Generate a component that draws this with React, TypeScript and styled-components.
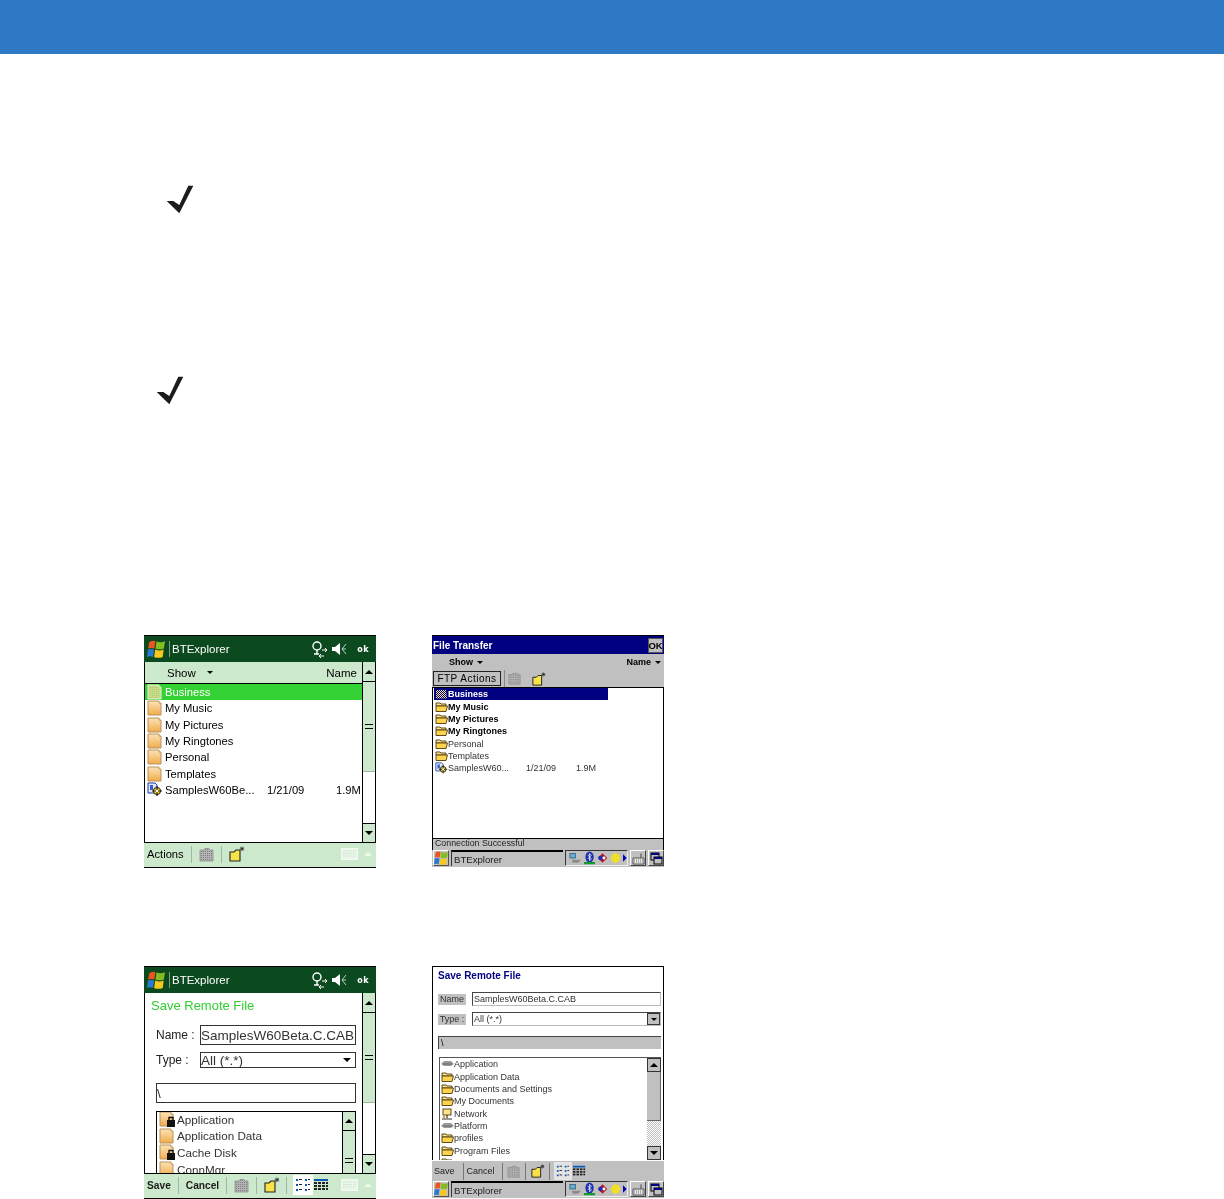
import React from "react";
import styled, { createGlobalStyle } from "styled-components";

const GlobalStyle = createGlobalStyle`
  html, body {
    margin: 0;
    padding: 0;
    background: #fff;
  }
`;

const UI_FONT = `"Liberation Sans", Arial, sans-serif`;
const OK_FONT = `"DejaVu Sans", Verdana, sans-serif`;

const Page = styled.div`
  width: 1224px;
  height: 1199px;
  overflow: hidden;
  background: #fff;
`;

const TopBand = styled.div`
  height: 54px;
  background: #2e7ac6;
`;

const NoteIcon = styled.svg<{ $left: number; $top: number }>`
  display: block;
  width: 29px;
  height: 29px;
  margin-left: ${(p) => p.$left}px;
  margin-top: ${(p) => p.$top}px;
`;

const ScreenGrid = styled.div`
  display: grid;
  grid-template-columns: 232px 232px;
  column-gap: 56px;
  row-gap: 98px;
  margin: 230px 0 0 144px;
`;

const Screen = styled.div<{ $ce?: boolean }>`
  width: 232px;
  height: ${(p) => (p.$ce ? 232 : 233)}px;
  box-sizing: border-box;
  display: flex;
  flex-direction: column;
  overflow: hidden;
  background: #fff;
  filter: blur(0.35px);
  font-family: ${UI_FONT};
  color: #000;
  border: 0 solid #000;
  border-width: ${(p) => (p.$ce ? "1px 0 0 0" : "1px 0")};
`;

/* Windows Mobile parts */

const WmTitle = styled.div`
  flex: none;
  height: 26px;
  box-sizing: content-box;
  display: flex;
  align-items: center;
  background: #0b4a1e;
  color: #fff;
  font-size: 11.5px;
  padding-left: 3px;
`;

const TitleSep = styled.span`
  width: 1px;
  height: 16px;
  margin: 0 2px 0 4px;
  background: #7d9e85;
`;

const OkLabel = styled.span`
  margin: 0 7px 0 10px;
  font-family: ${OK_FONT};
  font-size: 8px;
  font-weight: 700;
  letter-spacing: 0.5px;
`;

const IconGap = styled.span<{ $w: number }>`
  flex: none;
  width: ${(p) => p.$w}px;
`;

const Spacer = styled.span`
  flex: 1;
`;

const WmBody = styled.div`
  flex: 1;
  min-height: 0;
  display: flex;
  border: 0 solid #000;
  border-width: 0 1px;
`;

const WmPane = styled.div`
  flex: 1;
  min-width: 0;
  display: flex;
  flex-direction: column;
`;

const WmColumns = styled.div`
  flex: none;
  height: 21px;
  display: flex;
  align-items: center;
  padding: 0 5px 0 22px;
  background: #cde9cd;
  border-bottom: 1px solid #000;
  font-size: 11.5px;
`;

const WmRow = styled.div<{ $selected?: boolean }>`
  height: 16.33px;
  display: flex;
  align-items: center;
  padding-left: 2px;
  font-size: 11.2px;
  white-space: nowrap;
  background: ${(p) => (p.$selected ? "#33d133" : "transparent")};
  color: ${(p) => (p.$selected ? "#fff" : "#000")};
`;

const RowLabel = styled.span<{ $width?: number; $left?: number }>`
  display: inline-block;
  margin-left: ${(p) => p.$left ?? 2}px;
  ${(p) => (p.$width ? `width: ${p.$width}px;` : "")}
`;

const Scroll = styled.div`
  flex: none;
  width: 12px;
  display: flex;
  flex-direction: column;
  border-left: 1px solid #000;
  background: #fff;
`;

const ScrollBtn = styled.div<{ $h: number; $down?: boolean }>`
  flex: none;
  height: ${(p) => p.$h}px;
  box-sizing: border-box;
  display: flex;
  align-items: center;
  justify-content: center;
  background: #cde9cd;
  border: 0 solid #000;
  border-width: ${(p) => (p.$down ? "1px 0 0 0" : "0 0 1px 0")};
  &::after {
    content: "";
    border-left: 4px solid transparent;
    border-right: 4px solid transparent;
    ${(p) => (p.$down ? "border-top: 4px solid #000;" : "border-bottom: 4px solid #000;")}
  }
`;

const ScrollThumb = styled.div<{ $h: number }>`
  flex: none;
  height: ${(p) => p.$h}px;
  display: flex;
  align-items: center;
  justify-content: center;
  background: #cde9cd;
  border-bottom: 1px solid #9db89d;
  box-sizing: border-box;
  &::after {
    content: "";
    width: 8px;
    height: 3px;
    border-top: 1px solid #000;
    border-bottom: 1px solid #000;
  }
`;

const ScrollTrack = styled.div`
  flex: 1;
  min-height: 0;
`;

const WmToolbar = styled.div`
  flex: none;
  height: 25px;
  box-sizing: border-box;
  display: flex;
  align-items: center;
  padding: 0 0 2px 3px;
  background: #cde9cd;
  border-top: 1px solid #000;
  font-size: 11.2px;
`;

const ToolText = styled.span`
  font-size: 10.2px;
  font-weight: 700;
  color: #1c1c1c;
`;

const ToolSep = styled.span<{ $left?: number; $right?: number; $color?: string }>`
  flex: none;
  width: 1px;
  height: 17px;
  margin-left: ${(p) => p.$left ?? 7}px;
  margin-right: ${(p) => p.$right ?? 7}px;
  background: ${(p) => p.$color ?? "#9fb89f"};
`;

const ActiveTool = styled.span<{ $ce?: boolean }>`
  display: flex;
  padding: 2px;
  background: ${(p) => (p.$ce ? "#e4e4e4" : "#fff")};
`;

const FormHeading = styled.div`
  margin: 5px 0 11px 6px;
  color: #33cc33;
  font-size: 13px;
  line-height: 16px;
`;

const FormRow = styled.div<{ $mb: number }>`
  display: flex;
  align-items: center;
  margin: 0 6px 0 11px;
  margin-bottom: ${(p) => p.$mb}px;
  font-size: 12px;
  color: #222;
`;

const FormLabel = styled.span`
  width: 44px;
  flex: none;
`;

const WmField = styled.div<{ $h: number }>`
  flex: 1;
  min-width: 0;
  height: ${(p) => p.$h}px;
  box-sizing: border-box;
  display: flex;
  align-items: center;
  justify-content: space-between;
  padding: 0 4px 0 0;
  border: 1px solid #333;
  font-size: 13.5px;
  color: #333;
  white-space: nowrap;
`;

const SelectArrow = styled.span<{ $w?: number }>`
  border-left: ${(p) => p.$w ?? 5}px solid transparent;
  border-right: ${(p) => p.$w ?? 5}px solid transparent;
  border-top: ${(p) => p.$w ?? 5}px solid #000;
`;

const NestedList = styled.div`
  flex: 1;
  min-height: 0;
  margin: 0 6px 0 11px;
  display: flex;
  border: 1px solid #000;
  border-bottom: 0;
  overflow: hidden;
`;

const NestedRows = styled.div`
  flex: 1;
  min-width: 0;
  margin-top: -1px;
`;

const NestedRow = styled.div`
  height: 16.6px;
  display: flex;
  align-items: center;
  padding-left: 2px;
  gap: 2px;
  font-size: 11.7px;
  color: #333;
  white-space: nowrap;
`;

/* Windows CE parts */

const CeTitle = styled.div`
  flex: none;
  height: 18px;
  display: flex;
  align-items: center;
  justify-content: space-between;
  padding: 0 1px;
  background: #000080;
  color: #fff;
  font-size: 10px;
  font-weight: 700;
`;

const OkButton = styled.span`
  width: 15px;
  height: 15px;
  box-sizing: border-box;
  display: flex;
  align-items: center;
  justify-content: center;
  background: #c0c0c0;
  color: #000;
  border: 1px solid #555;
  font-size: 9.5px;
  font-weight: 700;
`;

const CeHeader = styled.div`
  flex: none;
  background: #c0c0c0;
  border-bottom: 1px solid #000;
  height: 33px;
  display: flex;
  flex-direction: column;
  font-size: 9px;
  font-weight: 700;
`;

const CeColumns = styled.div`
  height: 16px;
  display: flex;
  align-items: center;
  gap: 4px;
  padding: 0 3px 0 17px;
`;

const CeTools = styled.div`
  display: flex;
  align-items: center;
`;

const FtpButton = styled.span`
  margin-left: 1px;
  width: 68px;
  height: 15px;
  box-sizing: border-box;
  display: flex;
  align-items: center;
  justify-content: center;
  border: 1px solid #222;
  font-size: 10px;
  font-weight: 400;
  letter-spacing: 0.5px;
`;

const CeList = styled.div`
  flex: 1;
  min-height: 0;
  padding-left: 1px;
  overflow: hidden;
  border: 0 solid #000;
  border-width: 0 1px;
`;

const CeRow = styled.div<{ $selected?: boolean; $thin?: boolean; $w?: number }>`
  height: 12.35px;
  width: ${(p) => p.$w ?? 174}px;
  display: flex;
  align-items: center;
  padding-left: 1px;
  box-sizing: border-box;
  font-size: 9px;
  font-weight: ${(p) => (p.$thin ? 400 : 700)};
  white-space: nowrap;
  background: ${(p) => (p.$selected ? "#000080" : "transparent")};
  color: ${(p) => (p.$selected ? "#fff" : p.$thin ? "#333" : "#000")};
`;

const CeStatus = styled.div`
  flex: none;
  height: 12px;
  box-sizing: border-box;
  padding-left: 2px;
  background: #c0c0c0;
  border: 0 solid #000;
  border-width: 1px 1px 0 1px;
  font-size: 8.8px;
  line-height: 8px;
  color: #222;
  overflow: hidden;
`;

const Taskbar = styled.div`
  flex: none;
  height: 17px;
  display: flex;
  align-items: stretch;
  gap: 2px;
  padding-left: 1px;
  padding-bottom: 1px;
  box-sizing: border-box;
  background: #c0c0c0;
`;

const TaskStart = styled.span`
  width: 16px;
  display: flex;
  align-items: center;
  justify-content: center;
  background: #c0c0c0;
  border: 1px solid;
  border-color: #fff #555 #555 #fff;
  box-sizing: border-box;
`;

const TaskLabel = styled.span`
  width: 112px;
  box-sizing: border-box;
  display: flex;
  align-items: center;
  padding-left: 2px;
  border-top: 2px solid #000;
  border-left: 1px solid #333;
  font-size: 9.6px;
  color: #222;
`;

const Tray = styled.span`
  width: 63px;
  box-sizing: border-box;
  display: flex;
  align-items: center;
  gap: 2px;
  padding-left: 3px;
  border: 1px solid;
  border-color: #333 #eee #eee #333;
`;

const TaskButton = styled.span`
  width: 16px;
  box-sizing: border-box;
  display: flex;
  align-items: center;
  justify-content: center;
  border: 1px solid;
  border-color: #fff #444 #444 #fff;
`;

const CeForm = styled.div`
  flex: none;
  display: flex;
  flex-direction: column;
  border: 0 solid #000;
  border-width: 0 1px;
`;

const CeHeading = styled.div`
  flex: none;
  height: 25px;
  box-sizing: border-box;
  padding: 3px 0 0 5px;
  line-height: 12px;
  color: #000080;
  font-size: 10px;
  font-weight: 700;
`;

const CeFormRow = styled.div<{ $mb: number }>`
  flex: none;
  display: flex;
  align-items: center;
  margin: 0 2px 0 5px;
  margin-bottom: ${(p) => p.$mb}px;
  font-size: 9px;
  color: #333;
`;

const CeFormLabel = styled.span`
  width: 28px;
  height: 11px;
  line-height: 11px;
  background: #c0c0c0;
  margin-right: 6px;
  text-align: center;
`;

const CeField = styled.span<{ $h: number }>`
  flex: 1;
  height: ${(p) => p.$h}px;
  box-sizing: border-box;
  display: flex;
  align-items: center;
  justify-content: space-between;
  padding-left: 1px;
  border: 1px solid #bbb;
  border-top-color: #444;
  border-left-color: #444;
  font-size: 9px;
  color: #333;
`;

const ComboBtn = styled.span`
  width: 13px;
  height: 100%;
  box-sizing: border-box;
  display: flex;
  align-items: center;
  justify-content: center;
  background: #c0c0c0;
  border: 1px solid #333;
`;

const CePath = styled.div`
  flex: none;
  height: 13px;
  margin: 0 2px 8px 5px;
  display: flex;
  align-items: center;
  padding-left: 2px;
  background: #c0c0c0;
  border-top: 1px solid #444;
  border-left: 1px solid #444;
  font-size: 9px;
  box-sizing: border-box;
`;

const CeTreeBox = styled.div`
  flex: none;
  height: 103px;
  margin: 0 2px 0 6px;
  box-sizing: border-box;
  display: flex;
  border-top: 1px solid #555;
  border-left: 1px solid #555;
  overflow: hidden;
`;

const CeTreeRows = styled.div`
  flex: 1;
  min-width: 0;
`;

const CeScroll = styled.div`
  flex: none;
  width: 14px;
  display: flex;
  flex-direction: column;
`;

const CeScrollBtn = styled.span<{ $down?: boolean }>`
  flex: none;
  height: 14px;
  box-sizing: border-box;
  display: flex;
  align-items: center;
  justify-content: center;
  background: #c0c0c0;
  border: 1px solid #333;
  &::after {
    content: "";
    border-left: 4px solid transparent;
    border-right: 4px solid transparent;
    ${(p) => (p.$down ? "border-top: 4px solid #000;" : "border-bottom: 4px solid #000;")}
  }
`;

const CeThumb = styled.span`
  flex: none;
  height: 49px;
  background: #c0c0c0;
  border-right: 1px solid #666;
  border-bottom: 1px solid #666;
  box-sizing: border-box;
`;

const CeDither = styled.span`
  flex: 1;
  background: repeating-conic-gradient(#c0c0c0 0 25%, #fff 0 50%) 0 0 / 2px 2px;
`;

const CeToolbar = styled.div`
  flex: none;
  height: 20px;
  margin-top: 1px;
  display: flex;
  align-items: center;
  padding-left: 2px;
  background: #c0c0c0;
  font-size: 9px;
  color: #222;
`;

/* drawings */

const WinFlag = ({ size = 18 }: { size?: number }) => (
  <svg width={size} height={size} viewBox="1 1 16 16" style={{ flex: "none" }}>
    <path d="M3 3 Q5 1 8.5 2 L7.5 8.5 Q4.5 7.5 2 8.5 Z" fill="#f0541c" />
    <path d="M9.5 2 Q13 4 17 2 L16 8.5 Q12 10 8.5 8.5 Z" fill="#83bd1f" />
    <path d="M1.8 9.5 Q4.5 8.5 7.3 9.5 L6.3 16 Q3.5 15 1 16 Z" fill="#2a7ad4" />
    <path d="M8.3 9.5 Q12 11 15.8 9.5 L15 16 Q11 17.5 7.3 16 Z" fill="#f9c81c" />
  </svg>
);

const WmFolder = ({ lock, checker }: { lock?: boolean; checker?: boolean }) => (
  <svg width="16" height="16" viewBox="0 0 16 16" style={{ flex: "none" }}>
    <defs>
      <linearGradient id="wmf" x1="0" y1="0" x2="0" y2="1">
        <stop offset="0" stopColor="#fce3b8" />
        <stop offset="1" stopColor="#f0ac4c" />
      </linearGradient>
      <pattern id="chk" width="2" height="2" patternUnits="userSpaceOnUse">
        <rect width="2" height="2" fill="#b5d67a" />
        <rect width="1" height="1" fill="#e8d89a" />
      </pattern>
    </defs>
    <path
      d="M1 1 H12 V3 H14 V15 H1 Z"
      fill={checker ? "url(#chk)" : "url(#wmf)"}
      stroke={checker ? "#e6f4d8" : "#b9925a"}
      strokeWidth="1"
    />
    {lock && (
      <g>
        <rect x="8" y="9" width="8" height="7" fill="#111" />
        <path d="M10 9 V6.5 H14 V9" fill="none" stroke="#111" strokeWidth="1.4" />
      </g>
    )}
  </svg>
);

const OldFolder = () => (
  <svg width="13" height="12" viewBox="0 0 13 12" style={{ flex: "none" }}>
    <path d="M1 2 H5 L6 3 H11 V5 H1 Z" fill="#ffe38a" stroke="#4a3b10" strokeWidth="0.9" />
    <path d="M1 10.5 V5 H12.5 L11 10.5 Z" fill="#ffd34d" stroke="#4a3b10" strokeWidth="0.9" />
  </svg>
);

const CheckerFolder = () => (
  <svg width="13" height="12" viewBox="0 0 13 12" style={{ flex: "none" }}>
    <defs>
      <pattern id="ckr" width="2" height="2" patternUnits="userSpaceOnUse">
        <rect width="2" height="2" fill="#000080" />
        <rect width="1" height="1" fill="#ffe38a" />
        <rect x="1" y="1" width="1" height="1" fill="#ffe38a" />
      </pattern>
    </defs>
    <path d="M1 2 H11 L12 10.5 H1 Z" fill="url(#ckr)" />
  </svg>
);

const CabIcon = ({ size = 16 }: { size?: number }) => (
  <svg width={size} height={size} viewBox="0 0 16 16" style={{ flex: "none" }}>
    <path d="M1 1 H8 L10 3 V11 H1 Z" fill="#dfe8ff" stroke="#1e3a9a" strokeWidth="1" />
    <rect x="3" y="3" width="3" height="5" fill="#3a5bd0" />
    <circle cx="10" cy="9" r="3.6" fill="#f4d21c" stroke="#222" strokeWidth="1" />
    <path d="M10 4 V14 M5 9 H15" stroke="#222" strokeWidth="1.2" />
    <circle cx="10" cy="9" r="1.2" fill="#fff" />
  </svg>
);

const Drive = () => (
  <svg width="13" height="12" viewBox="0 0 13 12" style={{ flex: "none" }}>
    <path d="M0 6 L3 3 H10 L13 6 L10 8 H3 Z" fill="#9a9a9a" />
    <path d="M2 6 H11" stroke="#666" strokeWidth="1" />
  </svg>
);

const NetFolder = () => (
  <svg width="13" height="12" viewBox="0 0 13 12" style={{ flex: "none" }}>
    <rect x="2" y="1" width="8" height="6" fill="#ffe38a" stroke="#4a3b10" strokeWidth="0.9" />
    <path d="M6 7 V10 M1 11 H11" stroke="#333" strokeWidth="1.2" />
    <circle cx="3" cy="9" r="1.2" fill="#d9a520" />
  </svg>
);

const GreyFolderTool = ({ size = 15 }: { size?: number }) => (
  <svg width={size} height={size} viewBox="0 0 15 15" style={{ flex: "none" }}>
    <defs>
      <pattern id="gft" width="2" height="2" patternUnits="userSpaceOnUse">
        <rect width="2" height="2" fill="#b4b4b4" />
        <rect width="1" height="1" fill="#7e7e7e" />
      </pattern>
    </defs>
    <path d="M1 3 H5 L6 1.5 H10 L11 3 H14 V14 H1 Z" fill="url(#gft)" stroke="#8b8b8b" strokeWidth="0.8" />
  </svg>
);

const NewFolderTool = ({ size = 16 }: { size?: number }) => (
  <svg width={size} height={size} viewBox="0 0 16 16" style={{ flex: "none" }}>
    <path d="M1 6 H5 L7 4 H11 V15 H1 Z" fill="#f7e24a" stroke="#222" strokeWidth="1.1" />
    <path d="M13 0.5 V5 M10.8 2.8 H15.2 M11.4 1.2 L14.6 4.4 M14.6 1.2 L11.4 4.4" stroke="#333" strokeWidth="0.9" />
  </svg>
);

const DetailView = ({ size = 16 }: { size?: number }) => (
  <svg width={size} height={size} viewBox="0 0 16 16">
    {[2, 7, 12].map((y) => (
      <g key={y}>
        <rect x="1" y={y} width="2" height="2" fill="#0a5ab4" />
        <rect x="4" y={y} width="3" height="1" fill="#222" />
        <rect x="10" y={y} width="2" height="2" fill="#0a5ab4" />
        <rect x="13" y={y} width="2" height="1" fill="#222" />
      </g>
    ))}
  </svg>
);

const GridView = ({ size = 16 }: { size?: number }) => (
  <svg width={size} height={size} viewBox="0 0 16 16">
    <rect x="1" y="2" width="14" height="2" fill="#0a5ab4" />
    {[5, 8, 11].map((y) => (
      <g key={y} fill="#222">
        <rect x="1" y={y} width="3" height="2" />
        <rect x="5" y={y} width="3" height="2" />
        <rect x="9" y={y} width="3" height="2" />
        <rect x="13" y={y} width="2" height="2" />
      </g>
    ))}
  </svg>
);

const SipKeyboard = () => (
  <svg width="17" height="12" viewBox="0 0 17 12">
    <rect x="0.5" y="0.5" width="16" height="11" fill="#e9f5e9" stroke="#f3faf3" />
    <path d="M2 3 H15 M2 5.5 H15 M2 8 H15" stroke="#cde9cd" strokeWidth="1" strokeDasharray="1.5 1" />
  </svg>
);

const SipArrow = styled.span`
  margin: 0 4px 0 6px;
  border-left: 4px solid transparent;
  border-right: 4px solid transparent;
  border-bottom: 4px solid #eef8ee;
`;

const Antenna = () => (
  <svg width="17" height="19" viewBox="0 0 17 19">
    <circle cx="6" cy="6" r="4" fill="none" stroke="#fff" strokeWidth="1.4" />
    <path d="M6 10 V14 M3 14 H8" stroke="#fff" strokeWidth="1.4" />
    <path d="M11 10 H16 M14 8 L16 10 L14 12 M8 16 H13 M10 14 L8 16 L10 18" stroke="#fff" strokeWidth="1" fill="none" />
  </svg>
);

const Speaker = () => (
  <svg width="16" height="16" viewBox="0 0 16 16">
    <path d="M1 6 H4 L9 2 V14 L4 10 H1 Z" fill="#fff" />
    <path d="M15 3 L11 8 L15 13 M11 8 H15" stroke="#cfe0d4" strokeWidth="0.9" fill="none" />
  </svg>
);

const TrayIcons = () => (
  <>
    <svg width="14" height="12" viewBox="0 0 14 12">
      <rect x="1" y="1" width="6" height="5" fill="#5fb0d8" stroke="#33566e" strokeWidth="0.8" />
      <path d="M3 8 H13 L10 11 H4 Z" fill="#8b8b8b" />
    </svg>
    <svg width="12" height="15" viewBox="0 0 12 15">
      <ellipse cx="6" cy="6" rx="4.5" ry="6" fill="#1d2fb0" />
      <path d="M4 3.5 L8 8 L6 10 V2 L8 4 L4 8" stroke="#fff" strokeWidth="0.8" fill="none" />
      <path d="M0 12.5 H12" stroke="#0f9e2a" strokeWidth="2.4" />
    </svg>
    <svg width="12" height="12" viewBox="0 0 12 12">
      <path d="M6 1 L11 6 L6 11 L1 6 Z" fill="#c4161c" />
      <circle cx="4" cy="6" r="2.6" fill="#1d2fb0" />
      <circle cx="7.5" cy="6" r="1.6" fill="#fff" />
    </svg>
    <svg width="12" height="12" viewBox="0 0 12 12">
      <circle cx="6" cy="6" r="3.4" fill="none" stroke="#f4e21c" strokeWidth="2.2" />
      <path d="M6 0 V12 M0 6 H12 M2 2 L10 10 M10 2 L2 10" stroke="#f4e21c" strokeWidth="1.2" />
    </svg>
    <svg width="4" height="8" viewBox="0 0 4 8">
      <path d="M0 0 L4 4 L0 8 Z" fill="#0000c0" />
    </svg>
  </>
);

const CeKeyboard = () => (
  <svg width="13" height="13" viewBox="0 0 13 13">
    <path d="M1 6 H12 V12 H1 Z" fill="#e8e8e8" stroke="#333" strokeWidth="0.8" />
    <path d="M2 8 H11 M2 10 H11" stroke="#555" strokeWidth="0.8" strokeDasharray="1 1" />
    <path d="M9 5.5 V1.5" stroke="#333" strokeWidth="0.9" />
  </svg>
);

const CeWindows = () => (
  <svg width="13" height="13" viewBox="0 0 13 13">
    <rect x="1" y="1" width="8" height="7" fill="#c0c0c0" stroke="#000" />
    <rect x="1" y="1" width="8" height="2" fill="#000080" />
    <rect x="4" y="5" width="8" height="7" fill="#c0c0c0" stroke="#000" />
    <rect x="4" y="5" width="8" height="2" fill="#000080" />
  </svg>
);

const CeTaskbar = () => (
  <Taskbar>
    <TaskStart>
      <WinFlag size={14} />
    </TaskStart>
    <TaskLabel>BTExplorer</TaskLabel>
    <Tray>
      <TrayIcons />
    </Tray>
    <TaskButton>
      <CeKeyboard />
    </TaskButton>
    <TaskButton>
      <CeWindows />
    </TaskButton>
  </Taskbar>
);

const WmTitleBar = () => (
  <WmTitle>
    <WinFlag />
    <TitleSep />
    BTExplorer
    <Spacer />
    <Antenna />
    <IconGap $w={3} />
    <Speaker />
    <OkLabel>ok</OkLabel>
  </WmTitle>
);

const wmFolders = ["My Music", "My Pictures", "My Ringtones", "Personal", "Templates"];
const ceFolders = ["My Music", "My Pictures", "My Ringtones"];

const BrowseWm = () => (
  <Screen>
    <WmTitleBar />
    <WmBody>
      <WmPane>
        <WmColumns>
          Show
          <IconGap $w={11} />
          <SelectArrow $w={3} />
          <Spacer />
          Name
        </WmColumns>
        <WmRow $selected>
          <WmFolder checker />
          <RowLabel>Business</RowLabel>
        </WmRow>
        {wmFolders.map((name) => (
          <WmRow key={name}>
            <WmFolder />
            <RowLabel>{name}</RowLabel>
          </WmRow>
        ))}
        <WmRow>
          <CabIcon />
          <RowLabel $width={102}>SamplesW60Be...</RowLabel>
          <RowLabel $width={69} $left={0}>1/21/09</RowLabel>
          <RowLabel $left={0}>1.9M</RowLabel>
        </WmRow>
      </WmPane>
      <Scroll>
        <ScrollBtn $h={20} />
        <ScrollThumb $h={90} />
        <ScrollTrack />
        <ScrollBtn $h={19} $down />
      </Scroll>
    </WmBody>
    <WmToolbar>
      Actions
      <ToolSep />
      <GreyFolderTool />
      <ToolSep />
      <NewFolderTool />
      <Spacer />
      <SipKeyboard />
      <SipArrow />
    </WmToolbar>
  </Screen>
);

const BrowseCe = () => (
  <Screen $ce>
    <CeTitle>
      File Transfer
      <OkButton>OK</OkButton>
    </CeTitle>
    <CeHeader>
      <CeColumns>
        Show
        <SelectArrow $w={3} />
        <Spacer />
        Name
        <SelectArrow $w={3} />
      </CeColumns>
      <CeTools>
        <FtpButton>FTP Actions</FtpButton>
        <ToolSep $left={3} $right={3} $color="#888" />
        <GreyFolderTool size={13} />
        <IconGap $w={11} />
        <NewFolderTool size={14} />
      </CeTools>
    </CeHeader>
    <CeList>
      <CeRow $selected>
        <CheckerFolder />
        Business
      </CeRow>
      {ceFolders.map((name) => (
        <CeRow key={name}>
          <OldFolder />
          {name}
        </CeRow>
      ))}
      <CeRow $thin>
        <OldFolder />
        Personal
      </CeRow>
      <CeRow $thin>
        <OldFolder />
        Templates
      </CeRow>
      <CeRow $thin>
        <CabIcon size={13} />
        <RowLabel $width={78} $left={0}>SamplesW60...</RowLabel>
        <RowLabel $width={50} $left={0}>1/21/09</RowLabel>
        <RowLabel $left={0}>1.9M</RowLabel>
      </CeRow>
    </CeList>
    <CeStatus>Connection Successful</CeStatus>
    <CeTaskbar />
  </Screen>
);

const SaveWm = () => (
  <Screen>
    <WmTitleBar />
    <WmBody>
      <WmPane>
        <FormHeading>Save Remote File</FormHeading>
        <FormRow $mb={7}>
          <FormLabel>Name :</FormLabel>
          <WmField $h={20}>SamplesW60Beta.C.CAB</WmField>
        </FormRow>
        <FormRow $mb={15}>
          <FormLabel>Type :</FormLabel>
          <WmField $h={16}>
            All (*.*)
            <SelectArrow $w={4} />
          </WmField>
        </FormRow>
        <FormRow $mb={8}>
          <WmField $h={20}>\</WmField>
        </FormRow>
        <NestedList>
          <NestedRows>
            <NestedRow>
              <WmFolder lock />
              Application
            </NestedRow>
            <NestedRow>
              <WmFolder />
              Application Data
            </NestedRow>
            <NestedRow>
              <WmFolder lock />
              Cache Disk
            </NestedRow>
            <NestedRow>
              <WmFolder />
              ConnMgr
            </NestedRow>
          </NestedRows>
          <Scroll>
            <ScrollBtn $h={19} />
            <ScrollThumb $h={60} />
          </Scroll>
        </NestedList>
      </WmPane>
      <Scroll>
        <ScrollBtn $h={20} />
        <ScrollThumb $h={90} />
        <ScrollTrack />
        <ScrollBtn $h={19} $down />
      </Scroll>
    </WmBody>
    <WmToolbar>
      <ToolText>Save</ToolText>
      <ToolSep />
      <ToolText>Cancel</ToolText>
      <ToolSep />
      <GreyFolderTool />
      <ToolSep />
      <NewFolderTool />
      <ToolSep $left={6} $right={6} />
      <ActiveTool>
        <DetailView />
      </ActiveTool>
      <GridView />
      <Spacer />
      <SipKeyboard />
      <SipArrow />
    </WmToolbar>
  </Screen>
);

const ceTree: { name: string; kind: "drive" | "folder" | "net" }[] = [
  { name: "Application", kind: "drive" },
  { name: "Application Data", kind: "folder" },
  { name: "Documents and Settings", kind: "folder" },
  { name: "My Documents", kind: "folder" },
  { name: "Network", kind: "net" },
  { name: "Platform", kind: "drive" },
  { name: "profiles", kind: "folder" },
  { name: "Program Files", kind: "folder" },
];

const SaveCe = () => (
  <Screen $ce>
    <CeForm>
      <CeHeading>Save Remote File</CeHeading>
      <CeFormRow $mb={6}>
        <CeFormLabel>Name</CeFormLabel>
        <CeField $h={14}>SamplesW60Beta.C.CAB</CeField>
      </CeFormRow>
      <CeFormRow $mb={10}>
        <CeFormLabel>Type :</CeFormLabel>
        <CeField $h={14}>
          All (*.*)
          <ComboBtn>
            <SelectArrow $w={3} />
          </ComboBtn>
        </CeField>
      </CeFormRow>
      <CePath>\</CePath>
      <CeTreeBox>
        <CeTreeRows>
          {ceTree.map((item) => (
            <CeRow key={item.name} $thin $w={205}>
              {item.kind === "drive" && <Drive />}
              {item.kind === "folder" && <OldFolder />}
              {item.kind === "net" && <NetFolder />}
              {item.name}
            </CeRow>
          ))}
          <CeRow $thin $w={205}>
            <OldFolder />
          </CeRow>
        </CeTreeRows>
        <CeScroll>
          <CeScrollBtn />
          <CeThumb />
          <CeDither />
          <CeScrollBtn $down />
        </CeScroll>
      </CeTreeBox>
    </CeForm>
    <CeToolbar>
      Save
      <ToolSep $left={8} $right={3} $color="#777" />
      Cancel
      <ToolSep $left={7} $right={4} $color="#777" />
      <GreyFolderTool size={13} />
      <ToolSep $left={5} $right={5} $color="#777" />
      <NewFolderTool size={14} />
      <ToolSep $left={4} $right={4} $color="#777" />
      <ActiveTool $ce>
        <DetailView size={14} />
      </ActiveTool>
      <GridView size={14} />
    </CeToolbar>
    <CeTaskbar />
  </Screen>
);

const CheckMark = ({ left, top }: { left: number; top: number }) => (
  <NoteIcon $left={left} $top={top} viewBox="0 0 29 29">
    <path d="M1.7 16 L8.3 16 L14.3 20 L23.3 0.7 L28.3 0.7 L14.3 28.3 Z" fill="#1c1c1c" />
  </NoteIcon>
);

export default function App() {
  return (
    <Page>
      <GlobalStyle />
      <TopBand />
      <CheckMark left={165} top={131} />
      <CheckMark left={155} top={162} />
      <ScreenGrid>
        <BrowseWm />
        <BrowseCe />
        <SaveWm />
        <SaveCe />
      </ScreenGrid>
    </Page>
  );
}
